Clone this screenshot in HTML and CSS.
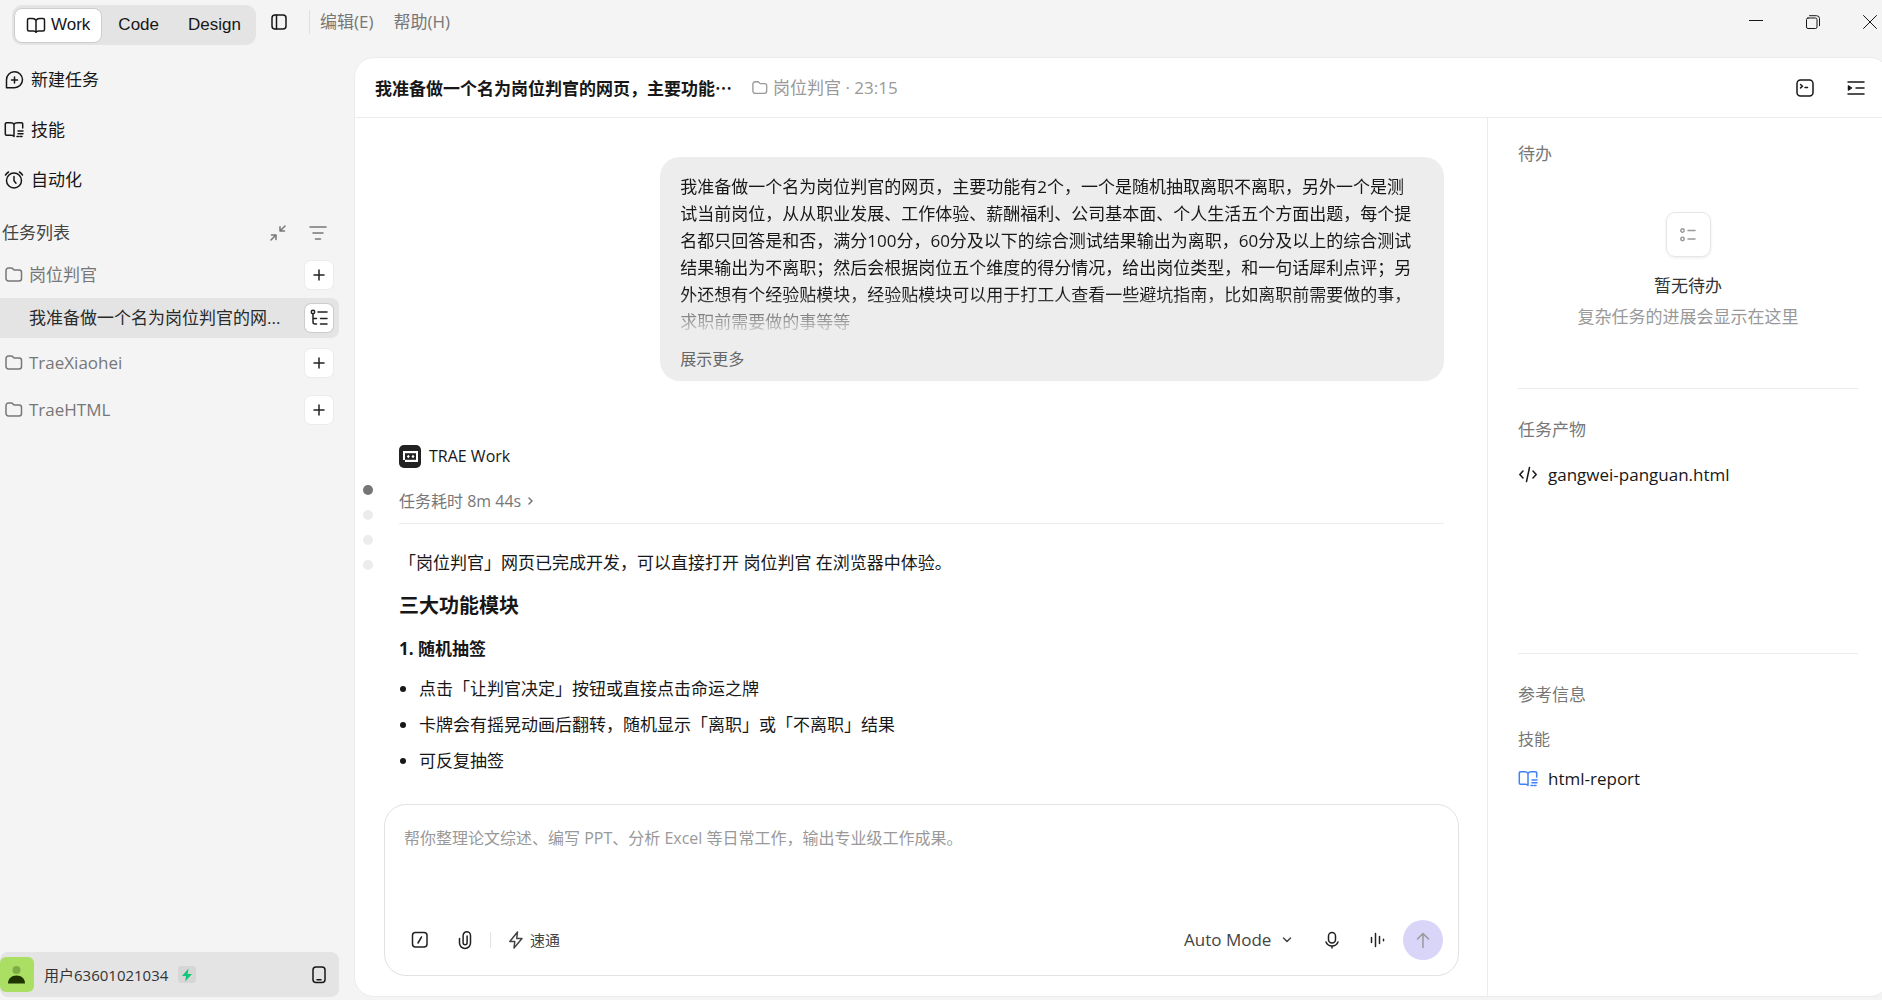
FILE: index.html
```html
<!DOCTYPE html>
<html lang="zh-CN">

<head>
    <meta charset="UTF-8">
    <meta name="viewport" content="width=device-width, initial-scale=1.0">
    <title>TRAE Work</title>
    <link rel="stylesheet" href="styles.css">
</head>

<body>
    <header class="titlebar">
        <div class="mode-tabs">
            <button class="mode-tab active">
                <svg class="icon" width="20" height="20" viewBox="0 0 20 20"><path d="M10 5.500C9.300 4 8 3.500 6.500 3.500H3A1.500 1.500 0 0 0 1.500 5v9.500A1.500 1.500 0 0 0 3 16h4.500c1.300 0 2 .4 2.500 1.300.5-.9 1.200-1.300 2.500-1.300H17a1.500 1.500 0 0 0 1.500-1.500V5A1.500 1.500 0 0 0 17 3.500h-3.500C12 3.500 10.700 4 10 5.500zM10 5.500v11.500"/></svg>
                Work
            </button>
            <button class="mode-tab">Code</button>
            <button class="mode-tab">Design</button>
        </div>
        <button class="icon-button panel-toggle" aria-label="切换侧栏">
            <svg class="icon" width="18" height="18" viewBox="0 0 18 18"><rect x="2" y="2" width="14" height="14" rx="3"/><path d="M6.500 2v14"/></svg>
        </button>
        <nav class="menu">
            <button class="menu-item">编辑(E)</button>
            <button class="menu-item">帮助(H)</button>
        </nav>
        <div class="window-controls">
            <button class="icon-button" aria-label="最小化">
                <svg class="icon thin" width="14" height="14" viewBox="0 0 14 14"><path d="M0 5.500h14"/></svg>
            </button>
            <button class="icon-button" aria-label="还原">
                <svg class="icon thin" width="14" height="14" viewBox="0 0 14 14"><rect x=".5" y="3" width="10.500" height="10.500" rx="1.500"/><path d="M3.500 .7h7a3 3 0 0 1 3 3v7"/></svg>
            </button>
            <button class="icon-button" aria-label="关闭">
                <svg class="icon thin" width="14" height="14" viewBox="0 0 14 14"><path d="M.5 .5l13 13M13.500 .5l-13 13"/></svg>
            </button>
        </div>
    </header>

    <div class="workspace">
        <aside class="sidebar">
            <nav class="main-nav">
                <button class="nav-item">
                    <svg class="icon" width="20" height="20" viewBox="0 0 20 20"><path d="M2.500 17.700V10a8 8 0 1 1 8 7.700zM10.500 7v6M7.500 10h6"/></svg>
                    新建任务
                </button>
                <button class="nav-item">
                    <svg class="icon" width="20" height="20" viewBox="0 0 20 20"><path d="M10 16.500c-.5-1-1.200-1.300-2.500-1.300H2.500a1.200 1.200 0 0 1-1.200-1.200V4a1.200 1.200 0 0 1 1.200-1.200h4C8.200 2.800 9.500 3.300 10 4.600c.5-1.300 1.800-1.800 3.500-1.800h4a1.200 1.200 0 0 1 1.200 1.200v4M10 4.600v11.900M14 11h5M14 13.800h5M13 16.500h1.500M16 16.500h2"/></svg>
                    技能
                </button>
                <button class="nav-item">
                    <svg class="icon" width="20" height="20" viewBox="0 0 20 20"><circle cx="10" cy="10.500" r="7.500"/><path d="M10 6.500v4.200l2 2.500M1.500 5a10 10 0 0 1 3-3M18.500 5a10 10 0 0 0-3-3"/></svg>
                    自动化
                </button>
            </nav>

            <div class="list-header">
                <span class="list-title">任务列表</span>
                <button class="icon-button" aria-label="全部收起">
                    <svg class="icon" width="16" height="16" viewBox="0 0 16 16"><path d="M15 1l-5 5M10 1.800V6h4.500M1 15l5-5M1.500 10H6v4.500"/></svg>
                </button>
                <button class="icon-button" aria-label="筛选">
                    <svg class="icon" width="18" height="18" viewBox="0 0 18 18"><path d="M1 3h16M4 9h10M6.500 15h5"/></svg>
                </button>
            </div>

            <ul class="task-list">
                <li class="task-row">
                    <svg class="icon" width="18" height="18" viewBox="0 0 18 18"><path d="M1 4.500A2.500 2.500 0 0 1 3.500 2h2.800c1.700 0 1.700 2 3.200 2h4.700a2.300 2.300 0 0 1 2.300 2.300v6.200A2.500 2.500 0 0 1 14 15H3.500A2.500 2.500 0 0 1 1 12.500z"/></svg>
                    <span class="task-name">岗位判官</span>
                    <button class="row-action" aria-label="新建"><svg class="icon" width="12" height="12" viewBox="0 0 12 12"><path d="M6 1v10M1 6h10"/></svg></button>
                </li>
                <li class="task-row selected">
                    <span class="task-name">我准备做一个名为岗位判官的网...</span>
                    <button class="row-action" aria-label="任务目录"><svg class="icon" width="18" height="18" viewBox="0 0 18 18"><circle cx="3" cy="3" r="1.700"/><path d="M3 5v8a2 2 0 0 0 2 2h1.500M3 9.500h3.500M8 3h9M10.500 9.500h6.500M10.500 15h6.500"/></svg></button>
                </li>
                <li class="task-row">
                    <svg class="icon" width="18" height="18" viewBox="0 0 18 18"><path d="M1 4.500A2.500 2.500 0 0 1 3.500 2h2.800c1.700 0 1.700 2 3.200 2h4.700a2.300 2.300 0 0 1 2.300 2.300v6.200A2.500 2.500 0 0 1 14 15H3.500A2.500 2.500 0 0 1 1 12.500z"/></svg>
                    <span class="task-name">TraeXiaohei</span>
                    <button class="row-action" aria-label="新建"><svg class="icon" width="12" height="12" viewBox="0 0 12 12"><path d="M6 1v10M1 6h10"/></svg></button>
                </li>
                <li class="task-row">
                    <svg class="icon" width="18" height="18" viewBox="0 0 18 18"><path d="M1 4.500A2.500 2.500 0 0 1 3.500 2h2.800c1.700 0 1.700 2 3.200 2h4.700a2.300 2.300 0 0 1 2.300 2.300v6.200A2.500 2.500 0 0 1 14 15H3.500A2.500 2.500 0 0 1 1 12.500z"/></svg>
                    <span class="task-name">TraeHTML</span>
                    <button class="row-action" aria-label="新建"><svg class="icon" width="12" height="12" viewBox="0 0 12 12"><path d="M6 1v10M1 6h10"/></svg></button>
                </li>
            </ul>

            <div class="user-bar">
                <svg class="avatar" width="34" height="35" viewBox="0 0 34 35"><rect width="34" height="35" rx="6" fill="#aadf63"/><circle cx="16.500" cy="13" r="4" fill="#80ac45"/><path d="M8 26.500c0-5 3.500-8 8.500-8s8.500 3 8.500 8z" fill="#1e3300"/></svg>
                <span class="user-name">用户63601021034</span>
                <span class="plan-badge"><svg width="12" height="14" viewBox="0 0 12 14"><path d="M7.500 .5L1 8h4l-.8 5.500L11 6H6.700z" fill="#10c878"/></svg></span>
                <button class="icon-button" aria-label="移动端">
                    <svg class="icon" width="16" height="18" viewBox="0 0 16 18"><rect x="2" y="1" width="12" height="15.500" rx="3"/><path d="M6 13.700h4"/></svg>
                </button>
            </div>
        </aside>

        <main class="panel">
            <div class="panel-header">
                <h1 class="panel-title">我准备做一个名为岗位判官的网页，主要功能…</h1>
                <svg class="icon crumb-icon" width="16" height="16" viewBox="0 0 18 18"><path d="M1 4.500A2.500 2.500 0 0 1 3.500 2h2.800c1.700 0 1.700 2 3.200 2h4.700a2.300 2.300 0 0 1 2.300 2.300v6.200A2.500 2.500 0 0 1 14 15H3.500A2.500 2.500 0 0 1 1 12.500z"/></svg>
                <span class="crumb">岗位判官 · 23:15</span>
                <div class="panel-tools">
                    <button class="icon-button" aria-label="终端">
                        <svg class="icon" width="18" height="18" viewBox="0 0 18 18"><rect x="1" y="1" width="16" height="16" rx="3.500"/><path d="M4.500 5.500l2 1.700-2 1.700M9 8.500h2.500"/></svg>
                    </button>
                    <button class="icon-button" aria-label="收起详情">
                        <svg class="icon" width="18" height="18" viewBox="0 0 18 18"><path d="M1 3h16M9 9h8M1 15h16"/><path d="M1.500 7v4l3-2z" fill="currentColor"/></svg>
                    </button>
                </div>
            </div>

            <div class="panel-body">
                <section class="chat">
                    <div class="conversation">
                        <div class="turn-rail">
                            <span class="turn-dot current"></span>
                            <span class="turn-dot"></span>
                            <span class="turn-dot"></span>
                            <span class="turn-dot"></span>
                        </div>
                        <div class="messages">
                            <div class="user-message">
                                <p class="message-text">我准备做一个名为岗位判官的网页，主要功能有2个，一个是随机抽取离职不离职，另外一个是测试当前岗位，从从职业发展、工作体验、薪酬福利、公司基本面、个人生活五个方面出题，每个提名都只回答是和否，满分100分，60分及以下的综合测试结果输出为离职，60分及以上的综合测试结果输出为不离职；然后会根据岗位五个维度的得分情况，给出岗位类型，和一句话犀利点评；另外还想有个经验贴模块，经验贴模块可以用于打工人查看一些避坑指南，比如离职前需要做的事，求职前需要做的事等等</p>
                                <button class="show-more">展示更多</button>
                            </div>

                            <div class="agent-name">
                                <svg width="22" height="23" viewBox="0 0 22 23"><rect width="22" height="23" rx="5" fill="#222"/><path d="M4 6h15v11H6v-2H4z" fill="#fff"/><path d="M6 8.200h11v6.600H6z" fill="#222"/><path d="M9.300 9.800l1.500 1.700-1.500 1.700-1.500-1.700zM14 9.800l1.500 1.700-1.500 1.700-1.500-1.700z" fill="#fff"/></svg>
                                TRAE Work
                            </div>
                            <button class="elapsed">
                                任务耗时 8m 44s
                                <svg class="icon" width="8" height="10" viewBox="0 0 8 10"><path d="M2 2l3 3-3 3"/></svg>
                            </button>

                            <article class="answer">
                                <p>「岗位判官」网页已完成开发，可以直接打开 岗位判官 在浏览器中体验。</p>
                                <h2>三大功能模块</h2>
                                <h3>1. 随机抽签</h3>
                                <ul>
                                    <li>点击「让判官决定」按钮或直接点击命运之牌</li>
                                    <li>卡牌会有摇晃动画后翻转，随机显示「离职」或「不离职」结果</li>
                                    <li>可反复抽签</li>
                                </ul>
                            </article>
                        </div>
                    </div>

                    <form class="composer">
                        <textarea class="composer-input" aria-label="输入任务" placeholder="帮你整理论文综述、编写 PPT、分析 Excel 等日常工作，输出专业级工作成果。"></textarea>
                        <div class="composer-tools">
                            <button type="button" class="icon-button" aria-label="命令">
                                <svg class="icon" width="18" height="18" viewBox="0 0 18 18"><rect x="1.500" y="1.500" width="14.500" height="14.500" rx="3"/><path d="M10.500 6l-3.500 6"/></svg>
                            </button>
                            <button type="button" class="icon-button" aria-label="附件">
                                <svg class="icon" width="16" height="20" viewBox="0 0 16 20"><path d="M2.500 8.500v4.500a5.500 5.500 0 0 0 11 0V5.500a3.700 3.700 0 0 0-7.400 0v7.300a2 2 0 0 0 4 0V6"/></svg>
                            </button>
                            <button type="button" class="quick-button">
                                <svg class="icon" width="16" height="20" viewBox="0 0 16 20"><path d="M9.500 2L1.800 11.500h5l-.8 6.500L14 8.500H8.700z"/></svg>
                                速通
                            </button>
                            <div class="mode-picker">
                                <select class="mode-select" aria-label="模式">
                                    <option>Auto Mode</option>
                                </select>
                                <svg class="icon" width="10" height="8" viewBox="0 0 10 8"><path d="M1.500 2L5 5.500 8.500 2"/></svg>
                            </div>
                            <button type="button" class="icon-button" aria-label="语音输入">
                                <svg class="icon" width="18" height="20" viewBox="0 0 18 20"><rect x="5.500" y="2.500" width="7" height="10.500" rx="3.500"/><path d="M3 12c1 2.500 3 4 6 4s5-1.500 6-4M9 16v2"/></svg>
                            </button>
                            <button type="button" class="icon-button" aria-label="语音对话">
                                <svg class="icon" width="18" height="18" viewBox="0 0 18 18"><path d="M2.500 6.500v5M6.500 2.500v13M10.500 5.500v7M14.500 8.300v1.400"/></svg>
                            </button>
                            <button type="submit" class="send-button" aria-label="发送">
                                <svg class="icon" width="16" height="18" viewBox="0 0 16 18"><path d="M8 16.500V2.500M2.500 8L8 2.500 13.500 8"/></svg>
                            </button>
                        </div>
                    </form>
                </section>

                <aside class="details">
                    <section class="detail-section">
                        <h2 class="detail-title">待办</h2>
                        <div class="todo-empty">
                            <div class="todo-icon">
                                <svg class="icon" width="18" height="18" viewBox="0 0 18 18"><circle cx="3.500" cy="4.500" r="1.700"/><circle cx="3.500" cy="13" r="1.700"/><path d="M9 4.500h7M9 13h7"/></svg>
                            </div>
                            <p class="todo-heading">暂无待办</p>
                            <p class="todo-hint">复杂任务的进展会显示在这里</p>
                        </div>
                    </section>
                    <section class="detail-section">
                        <h2 class="detail-title">任务产物</h2>
                        <a class="detail-link" href="#">
                            <svg class="icon" width="20" height="20" viewBox="0 0 20 20"><path d="M5 6L1.800 9.500 5 13M15 6l3.200 3.500L15 13M11.500 2.500l-3 14"/></svg>
                            gangwei-panguan.html
                        </a>
                    </section>
                    <section class="detail-section">
                        <h2 class="detail-title">参考信息</h2>
                        <h3 class="detail-subtitle">技能</h3>
                        <a class="detail-link skill" href="#">
                            <svg class="icon" width="20" height="20" viewBox="0 0 20 20"><path d="M10 16.500c-.5-1-1.200-1.300-2.500-1.300H2.500a1.200 1.200 0 0 1-1.200-1.200V4a1.200 1.200 0 0 1 1.200-1.200h4C8.200 2.800 9.500 3.300 10 4.600c.5-1.300 1.800-1.800 3.500-1.800h4a1.200 1.200 0 0 1 1.200 1.200v4M10 4.600v11.900M14 11h5M14 13.800h5M13 16.500h1.500M16 16.500h2"/></svg>
                            html-report
                        </a>
                    </section>
                </aside>
            </div>
        </main>
    </div>
</body>

</html>
```
FILE: styles.css
```css
* {
    box-sizing: border-box;
}

body {
    margin: 0;
    height: 100vh;
    display: flex;
    flex-direction: column;
    overflow: hidden;
    background: #f4f4f4;
    color: #171717;
    font-family: 'Open Sans', 'Noto Sans CJK SC', sans-serif;
    font-size: 17px;
    line-height: 24px;
}

h1, h2, h3, p, ul {
    margin: 0;
    padding: 0;
}

button, select, textarea {
    margin: 0;
    padding: 0;
    border: none;
    background: none;
    color: inherit;
    font: inherit;
}

button {
    cursor: pointer;
}

.icon {
    flex: none;
    fill: none;
    stroke: currentColor;
    stroke-width: 1.5;
    stroke-linecap: round;
    stroke-linejoin: round;
}

.icon.thin {
    stroke-width: 1;
}

.icon-button {
    display: flex;
    align-items: center;
    justify-content: center;
}

/* title bar */
.titlebar {
    flex: none;
    display: flex;
    align-items: center;
    height: 57px;
    padding: 0 5px 14px 12px;
}

.mode-tabs {
    display: flex;
    align-items: center;
    height: 40px;
    margin-top: 7px;
    padding: 0 2px;
    border-radius: 10px;
    background: #e4e4e4;
    font-family: 'Liberation Sans', Arial, sans-serif;
}

.mode-tab {
    display: flex;
    align-items: center;
    gap: 5px;
    height: 35px;
    padding: 0 12px 0 15px;
    border: 1px solid transparent;
    border-radius: 8px;
}

.mode-tab.active {
    padding: 0 11px;
    background: #fff;
    border-color: #ccc;
}

.panel-toggle {
    margin: 0 21px 0 14px;
}

.menu {
    display: flex;
    gap: 20px;
    padding-left: 10px;
    border-left: 1px solid #e0e0e0;
    color: #777;
}

.window-controls {
    display: flex;
    gap: 43px;
    margin-left: auto;
}

/* sidebar */
.workspace {
    flex: 1;
    display: flex;
    min-height: 0;
    padding-bottom: 3px;
}

.sidebar {
    flex: none;
    width: 354px;
    padding-right: 15px;
    display: flex;
    flex-direction: column;
}

.main-nav {
    display: flex;
    flex-direction: column;
    align-items: flex-start;
    gap: 26px;
    padding: 11px 0 0 4px;
}

.nav-item {
    display: flex;
    align-items: center;
    gap: 7px;
}

.list-header {
    display: flex;
    align-items: center;
    gap: 23px;
    margin-top: 29px;
    padding: 0 12px 0 2px;
    color: #777;
}

.list-title {
    flex: 1;
    color: #444;
}

.task-list {
    display: flex;
    flex-direction: column;
    gap: 7px;
    margin-top: 10px;
    list-style: none;
}

.task-row {
    display: flex;
    align-items: center;
    gap: 6px;
    height: 40px;
    padding: 0 6px 0 5px;
    color: #777;
}

.task-row:first-child {
    margin-bottom: -4px;
}

.task-row.selected {
    margin-bottom: -2px;
    padding-left: 29px;
    border-radius: 0 8px 8px 0;
    background: #e4e4e4;
    color: #2a2a2a;
}

.task-name {
    flex: 1;
    white-space: nowrap;
}

.row-action {
    display: flex;
    align-items: center;
    justify-content: center;
    width: 28px;
    height: 28px;
    border-radius: 6px;
    background: #fff;
    color: #222;
    box-shadow: 0 0 0 1px #ececec;
}

.selected .row-action {
    box-shadow: 0 0 0 1px #ccc;
}

.user-bar {
    display: flex;
    align-items: center;
    height: 45px;
    margin-top: auto;
    padding-right: 12px;
    border-radius: 8px;
    background: #e4e4e4;
    font-size: 15px;
}

.user-name {
    margin: 0 10px;
    color: #333;
}

.plan-badge {
    display: flex;
    align-items: center;
    justify-content: center;
    width: 18px;
    height: 17px;
    margin-right: auto;
    border-radius: 3px;
    background: #d6d6d6;
}

/* main panel, its right edge runs past the window */
.panel {
    flex: 1;
    min-width: 0;
    display: flex;
    flex-direction: column;
    margin-right: -8px;
    border: 1px solid #ececec;
    border-radius: 20px;
    background: #fff;
}

.panel-header {
    flex: none;
    display: flex;
    align-items: center;
    height: 60px;
    padding: 0 24px 0 20px;
    border-bottom: 1px solid #ececec;
}

.panel-title {
    margin-right: 20px;
    font-family: 'Noto Sans CJK SC', sans-serif;
    font-size: 17px;
    font-weight: 700;
}

.crumb-icon,
.crumb {
    color: #999;
}

.crumb {
    margin-left: 5px;
}

.panel-tools {
    display: flex;
    gap: 33px;
    margin-left: auto;
}

.panel-body {
    flex: 1;
    display: flex;
    min-height: 0;
}

/* chat */
.chat {
    flex: 1;
    min-width: 0;
    display: flex;
    flex-direction: column;
    padding: 0 28px 20px 29px;
}

.conversation {
    flex: 1;
    display: flex;
    min-height: 0;
    margin-left: -21px;
    padding-right: 15px;
    overflow: hidden;
}

.turn-rail {
    flex: none;
    display: flex;
    flex-direction: column;
    gap: 15px;
    width: 36px;
    padding-top: 367px;
}

.turn-dot {
    width: 10px;
    height: 10px;
    border-radius: 50%;
    background: #ececec;
}

.turn-dot.current {
    background: #757575;
}

.messages {
    flex: 1;
    min-width: 0;
    display: flex;
    flex-direction: column;
    padding-top: 39px;
}

.user-message {
    align-self: flex-end;
    width: 75%;
    padding: 16px 24px 10px 20px;
    border-radius: 20px;
    background: #ededed;
}

.message-text {
    line-height: 27px;
    mask-image: linear-gradient(#000 120px, transparent 165px);
}

.show-more {
    margin-top: 12px;
    color: #666;
    font-size: 16px;
}

.agent-name {
    display: flex;
    align-items: center;
    gap: 8px;
    margin-top: 63px;
    font-size: 16px;
}

.elapsed {
    display: flex;
    align-items: center;
    gap: 6px;
    margin-top: 21px;
    padding-bottom: 10px;
    border-bottom: 1px solid #ececec;
    color: #777;
    font-size: 16px;
}

.answer {
    padding-top: 27px;
}

.answer h2 {
    margin-top: 18px;
    font-size: 20px;
    line-height: 26px;
}

.answer h3 {
    margin-top: 18px;
    font-size: 17px;
}

.answer ul {
    display: flex;
    flex-direction: column;
    gap: 12px;
    margin-top: 16px;
    padding-left: 20px;
}

.composer {
    flex: none;
    display: flex;
    flex-direction: column;
    height: 172px;
    padding: 21px 15px 15px 19px;
    border: 1px solid #e2e2e2;
    border-radius: 22px;
}

.composer-input {
    flex: 1;
    resize: none;
    outline: none;
    font-size: 16px;
}

.composer-input::placeholder {
    color: #999;
    opacity: 1;
}

.composer-tools {
    display: flex;
    align-items: center;
    padding-left: 7px;
    color: #222;
}

.composer-tools .icon-button + .icon-button {
    margin-left: 28px;
}

.quick-button {
    display: flex;
    align-items: center;
    gap: 6px;
    height: 16px;
    margin-left: 17px;
    padding-left: 17px;
    border-left: 1px solid #e2e2e2;
    color: #444;
    font-size: 15px;
}

.mode-picker {
    display: flex;
    align-items: center;
    gap: 10px;
    margin: 0 31px 0 auto;
    color: #444;
}

.mode-select {
    appearance: none;
    outline: none;
}

.send-button {
    display: flex;
    align-items: center;
    justify-content: center;
    width: 40px;
    height: 40px;
    margin-left: 16px;
    border-radius: 50%;
    background: #d8d5f9;
    color: #999;
}

/* details */
.details {
    flex: none;
    width: 402px;
    padding: 0 31px 0 30px;
    border-left: 1px solid #ececec;
}

.detail-section {
    height: 265px;
    padding-top: 29px;
    border-bottom: 1px solid #ececec;
}

.detail-section:first-child {
    height: 271px;
    padding-top: 24px;
}

.detail-section:last-child {
    height: auto;
    border-bottom: none;
}

.detail-title,
.detail-subtitle {
    color: #777;
    font-size: 17px;
    font-weight: 400;
}

.detail-subtitle {
    margin-top: 20px;
    font-size: 16px;
}

.todo-empty {
    display: flex;
    flex-direction: column;
    align-items: center;
    margin-top: 46px;
    text-align: center;
}

.todo-icon {
    display: flex;
    align-items: center;
    justify-content: center;
    width: 45px;
    height: 45px;
    border: 1px solid #e6e6e6;
    border-radius: 9px;
    box-shadow: 0 1px 3px rgba(0, 0, 0, 0.08);
    color: #999;
}

.todo-heading {
    margin-top: 17px;
    color: #333;
}

.todo-hint {
    margin-top: 7px;
    color: #999;
}

.detail-link {
    display: flex;
    align-items: center;
    gap: 10px;
    margin-top: 21px;
    color: #171717;
    text-decoration: none;
}

.detail-link.skill {
    margin-top: 16px;
}

.detail-link.skill .icon {
    color: #3f82f7;
}
```
